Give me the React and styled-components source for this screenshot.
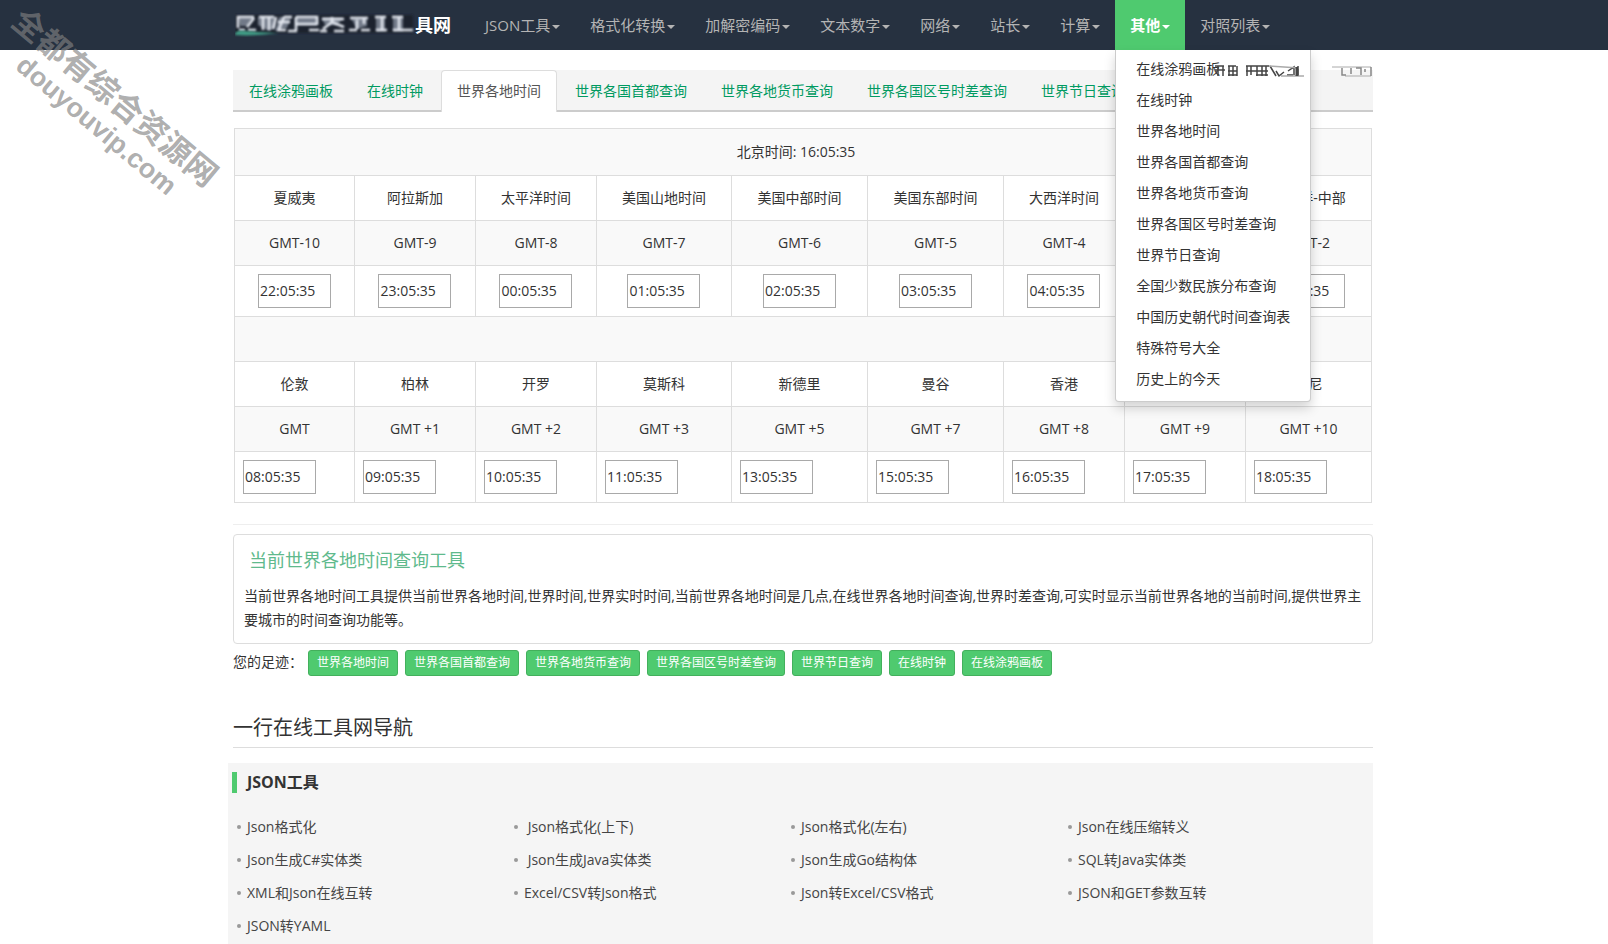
import React from "react";
import styled, { createGlobalStyle } from "styled-components";

const navItems = [
    "JSON工具",
    "格式化转换",
    "加解密编码",
    "文本数字",
    "网络",
    "站长",
    "计算",
    "其他",
    "对照列表",
];

const menuItems = [
    "在线涂鸦画板",
    "在线时钟",
    "世界各地时间",
    "世界各国首都查询",
    "世界各地货币查询",
    "世界各国区号时差查询",
    "世界节日查询",
    "全国少数民族分布查询",
    "中国历史朝代时间查询表",
    "特殊符号大全",
    "历史上的今天",
];

const tabs = [
    "在线涂鸦画板",
    "在线时钟",
    "世界各地时间",
    "世界各国首都查询",
    "世界各地货币查询",
    "世界各国区号时差查询",
    "世界节日查询",
];

const west = [
    ["夏威夷", "GMT-10", "22:05:35"],
    ["阿拉斯加", "GMT-9", "23:05:35"],
    ["太平洋时间", "GMT-8", "00:05:35"],
    ["美国山地时间", "GMT-7", "01:05:35"],
    ["美国中部时间", "GMT-6", "02:05:35"],
    ["美国东部时间", "GMT-5", "03:05:35"],
    ["大西洋时间", "GMT-4", "04:05:35"],
    ["", "", "05:05:35"],
    ["大西洋-中部", "GMT-2", "06:05:35"],
];

const east = [
    ["伦敦", "GMT", "08:05:35"],
    ["柏林", "GMT +1", "09:05:35"],
    ["开罗", "GMT +2", "10:05:35"],
    ["莫斯科", "GMT +3", "11:05:35"],
    ["新德里", "GMT +5", "13:05:35"],
    ["曼谷", "GMT +7", "15:05:35"],
    ["香港", "GMT +8", "16:05:35"],
    ["", "GMT +9", "17:05:35"],
    ["悉尼", "GMT +10", "18:05:35"],
];

const columns = [120, 121, 121, 135, 136, 136, 121, 121, 126];

const footprints = [
    "世界各地时间",
    "世界各国首都查询",
    "世界各地货币查询",
    "世界各国区号时差查询",
    "世界节日查询",
    "在线时钟",
    "在线涂鸦画板",
];

const jsonTools = [
    "Json格式化",
    "\u00a0Json格式化(上下)",
    "Json格式化(左右)",
    "Json在线压缩转义",
    "Json生成C#实体类",
    "\u00a0Json生成Java实体类",
    "Json生成Go结构体",
    "SQL转Java实体类",
    "XML和Json在线互转",
    "Excel/CSV转Json格式",
    "Json转Excel/CSV格式",
    "JSON和GET参数互转",
    "JSON转YAML",
];

function BrandMark() {
    return (
        <svg width="180" height="26" viewBox="0 0 180 26" aria-hidden="true">
            <defs>
                <filter id="soft" x="-5%" y="-20%" width="110%" height="140%">
                    <feGaussianBlur stdDeviation="0.8" />
                </filter>
            </defs>
            <rect x="0" y="3" width="178" height="18" fill="#1b242e" filter="url(#soft)" />
            <g filter="url(#soft)" fill="#8e97a6" opacity="0.75">
                <path d="M3 5h16l-6 9H5zM23 5h17v10l-6 4-11-6zM44 5h12l-4 11-12 3z" />
                <path d="M61 5h21v8H61zM87 6h21l-6 7H90zM116 6h16v8l-10 3zM141 5h9v14h-9zM158 5h10v14h-10z" />
            </g>
            <g filter="url(#soft)" fill="none" stroke="#e2e6ee" strokeWidth="2.6">
                <path d="M19 5H3v11M19 6l-7 9M4 18h6M13 18h8" />
                <path d="M24 5h15M28 5v13M34 5v13M41 5l-3 12M43 10h12M42 18h9" />
                <path d="M49 5h8M49 5l-5 12M61 5h21v8M61 5v14M61 12h21M53 19h9M74 18h10" />
                <path d="M87 7h22M97 5v6M88 17l9-7 12 5M85 19h7M99 19h10" />
                <path d="M115 6h18M122 8v9M129 6v6M114 18h8M126 18h9" />
                <path d="M140 5h11M147 5v14M141 18h11M157 5h11M164 5v14M158 18h20" />
            </g>
            <path d="M0 22c3-6 6-2 44-1-16 2-30 3-44 2z" fill="#3f9c85" filter="url(#soft)" />
        </svg>
    );
}

function MenuSmudge() {
    return (
        <svg width="160" height="14" viewBox="0 0 160 14" aria-hidden="true">
            <defs>
                <filter id="smudge" x="-5%" y="-20%" width="110%" height="140%">
                    <feGaussianBlur stdDeviation="0.5" />
                </filter>
            </defs>
            <g filter="url(#smudge)" fill="none" stroke="#444" strokeWidth="1.5">
                <path d="M0 2h9M3 2v10M8 2v10M0 6h10M13 2h8M14 2v10M18 2v10M22 2v10M13 7h9M13 11h9" />
                <path d="M31 2h23M32 2v10M36 2v9M42 2v10M47 2v10M51 2v10M31 7h22M41 11h12" />
                <path d="M55 2l6 10M61 7l3 5 5-4M73 7l6-4v8M72 11h6M83 2v10" />
                <path d="M54 2l30 2M66 12h23" stroke="#aaa" />
                <path d="M82 3v9" strokeWidth="3" />
                <path d="M117 3h39M130 12h26" stroke="#aaa" strokeWidth="1" />
                <path d="M127 4v7h4M136 4v6M141 4h5v7M150 5v3M156 3v9" stroke="#888" />
            </g>
        </svg>
    );
}

function ZoneRows({ zones, centered }) {
    return (
        <>
            <tr>
                {zones.map(([city, , time]) => (
                    <Cell key={time}>{city}</Cell>
                ))}
            </tr>
            <tr>
                {zones.map(([, gmt, time]) => (
                    <Cell key={time}>{gmt}</Cell>
                ))}
            </tr>
            <tr>
                {zones.map(([city, , time]) => (
                    <Cell key={time} $align={centered ? "center" : "left"}>
                        <TimeInput aria-label={city || time} defaultValue={time} />
                    </Cell>
                ))}
            </tr>
        </>
    );
}

function App() {
    return (
        <>
            <GlobalStyle />
            <Navbar>
                <NavInner>
                    <Brand href="#">
                        <BrandMark />
                        具网
                    </Brand>
                    <NavList>
                        {navItems.map((item) => (
                            <NavItem key={item}>
                                <NavLink href="#" $active={item === "其他"}>
                                    {item}
                                    <Caret />
                                </NavLink>
                                {item === "其他" && (
                                    <Dropdown>
                                        {menuItems.map((entry) => (
                                            <li key={entry}>
                                                <MenuLink href="#">{entry}</MenuLink>
                                            </li>
                                        ))}
                                        <Smudge>
                                            <MenuSmudge />
                                        </Smudge>
                                    </Dropdown>
                                )}
                            </NavItem>
                        ))}
                    </NavList>
                </NavInner>
            </Navbar>
            <Watermark>
                <WatermarkName>全都有综合资源网</WatermarkName>
                <WatermarkSite>douyouvip.com</WatermarkSite>
            </Watermark>
            <Container>
                <Tabs>
                    {tabs.map((tab) => (
                        <li key={tab}>
                            <TabLink href="#" $active={tab === "世界各地时间"}>
                                {tab}
                            </TabLink>
                        </li>
                    ))}
                </Tabs>
                <TimeTable>
                    <colgroup>
                        {columns.map((width, i) => (
                            <col key={i} style={{ width: `${(width / 1137) * 100}%` }} />
                        ))}
                    </colgroup>
                    <tbody>
                        <tr>
                            <ClockCell colSpan={9}>北京时间: 16:05:35</ClockCell>
                        </tr>
                        <ZoneRows zones={west} centered />
                        <tr>
                            <Cell colSpan={9}>&nbsp;</Cell>
                        </tr>
                        <ZoneRows zones={east} />
                    </tbody>
                </TimeTable>
                <Divider />
                <Panel>
                    <PanelTitle>当前世界各地时间查询工具</PanelTitle>
                    <PanelText>
                        当前世界各地时间工具提供当前世界各地时间,世界时间,世界实时时间,当前世界各地时间是几点,在线世界各地时间查询,世界时差查询,可实时显示当前世界各地的当前时间,提供世界主要城市的时间查询功能等。
                    </PanelText>
                </Panel>
                <Footprints>
                    <span>您的足迹：</span>
                    {footprints.map((item) => (
                        <FootprintLink key={item} href="#">
                            {item}
                        </FootprintLink>
                    ))}
                </Footprints>
                <PageTitle>一行在线工具网导航</PageTitle>
                <ToolSection>
                    <SectionTitle>JSON工具</SectionTitle>
                    <ToolList>
                        {jsonTools.map((tool) => (
                            <ToolItem key={tool}>
                                <a href="#">{tool}</a>
                            </ToolItem>
                        ))}
                    </ToolList>
                </ToolSection>
            </Container>
        </>
    );
}

const GlobalStyle = createGlobalStyle`
    * {
        box-sizing: border-box;
    }
    html {
        scrollbar-width: none;
    }
    body {
        margin: 0;
        overflow-x: hidden;
        background: #fff;
        color: #333;
        font-family: "Open Sans", "Noto Sans CJK SC", sans-serif;
        font-size: 14px;
        line-height: 20px;
    }
    ul {
        list-style: none;
        margin: 0;
        padding: 0;
    }
    a {
        color: inherit;
        text-decoration: none;
    }
`;

const Navbar = styled.nav`
    background: #263140;
`;

const Container = styled.main`
    max-width: 1142px;
    margin: 0 auto;
    padding-right: 2px;
`;

const NavInner = styled.div`
    display: flex;
    max-width: 1142px;
    height: 50px;
    margin: 0 auto;
`;

const Brand = styled.a`
    display: flex;
    align-items: center;
    width: 237px;
    padding-left: 2px;
    color: #fff;
    font-size: 18px;
    font-weight: 700;
`;

const NavList = styled.ul`
    display: flex;
`;

const NavItem = styled.li`
    position: relative;
`;

const NavLink = styled.a`
    display: flex;
    align-items: center;
    gap: 2px;
    height: 50px;
    padding: 0 15px;
    font-size: 15px;
    white-space: nowrap;
    color: ${(props) => (props.$active ? "#fff" : "#b4b4b4")};
    background: ${(props) => (props.$active ? "#4fca6f" : "transparent")};
    font-weight: ${(props) => (props.$active ? 700 : 400)};
`;

const Caret = styled.span`
    border: 4px solid transparent;
    border-top-color: currentColor;
    border-bottom: 0;
    margin-top: 4px;
`;

const Dropdown = styled.ul`
    position: absolute;
    top: 50px;
    left: 0;
    z-index: 10;
    padding: 3px 0 7px;
    background: #fff;
    border: 1px solid rgba(0, 0, 0, 0.2);
    border-top: 0;
    border-radius: 0 0 4px 4px;
    box-shadow: 0 6px 12px rgba(0, 0, 0, 0.175);
`;

const MenuLink = styled.a`
    display: block;
    padding: 0 20px;
    line-height: 31px;
    white-space: nowrap;
`;

const Smudge = styled.span`
    position: absolute;
    top: 14px;
    left: 99px;
    line-height: 0;
`;

const Watermark = styled.div`
    position: absolute;
    top: 1px;
    left: 29px;
    z-index: 20;
    transform: rotate(40deg);
    transform-origin: 0 0;
    color: rgba(130, 130, 130, 0.65);
    font-weight: 700;
    white-space: nowrap;
    pointer-events: none;
`;

const WatermarkName = styled.div`
    font-size: 32px;
    line-height: 36px;
`;

const WatermarkSite = styled.div`
    font-family: "Liberation Sans", sans-serif;
    font-size: 27px;
    line-height: 32px;
    padding-left: 32px;
`;

const Tabs = styled.ul`
    display: flex;
    height: 42px;
    margin-top: 20px;
    background: #f4f4f4;
    border-bottom: 2px solid #ccc;
`;

const TabLink = styled.a`
    display: block;
    height: 42px;
    margin-right: 2px;
    padding: 10px 15px;
    border: 1px solid transparent;
    border-bottom: 0;
    border-radius: 4px 4px 0 0;
    white-space: nowrap;
    color: ${(props) => (props.$active ? "#555" : "#009a61")};
    border-color: ${(props) => (props.$active ? "#ddd" : "transparent")};
    background: ${(props) => (props.$active ? "#fff" : "transparent")};
`;

const TimeTable = styled.table`
    width: calc(100% - 2px);
    margin: 16px 1px 0;
    table-layout: fixed;
    border-collapse: collapse;
    tr:nth-child(odd) {
        background: #f9f9f9;
    }
`;

const Cell = styled.td`
    padding: 8px;
    border: 1px solid #ddd;
    line-height: 28px;
    text-align: ${(props) => props.$align || "center"};
`;

const ClockCell = styled(Cell)`
    padding-right: 22px;
    line-height: 30px;
`;

const TimeInput = styled.input`
    display: inline-block;
    width: 73px;
    height: 34px;
    padding: 0 1px 2px;
    border: 1px solid #a9a9a9;
    background: #fff;
    color: #333;
    font: inherit;
    vertical-align: top;
`;

const Divider = styled.hr`
    margin: 21px 0 9px;
    border: 0;
    border-top: 1px solid #eee;
`;

const Panel = styled.section`
    padding: 12px 10px 11px;
    border: 1px solid #ddd;
    border-radius: 4px;
`;

const PanelTitle = styled.h2`
    margin: 0 0 11px;
    padding: 0 5px;
    color: #5fba8d;
    font-size: 18px;
    font-weight: 400;
    line-height: 26px;
`;

const PanelText = styled.p`
    margin: 0;
    line-height: 24px;
`;

const Footprints = styled.div`
    display: flex;
    gap: 7px;
    margin-top: 6px;
    span {
        width: 68px;
        line-height: 24px;
        white-space: nowrap;
    }
`;

const FootprintLink = styled.a`
    padding: 0 8px;
    border: 1px solid #43b05c;
    border-radius: 3px;
    background: #4fca6f;
    color: #fff;
    font-size: 12px;
    line-height: 24px;
`;

const PageTitle = styled.h2`
    margin: 37px 0 15px;
    padding-bottom: 4px;
    border-bottom: 1px solid #ddd;
    font-size: 20px;
    font-weight: 400;
    line-height: 30px;
`;

const ToolSection = styled.section`
    margin-left: -5px;
    padding: 9px 0 20px 4px;
    background: #f5f5f5;
`;

const SectionTitle = styled.h3`
    margin: 0 0 17px;
    padding-left: 10px;
    border-left: 5px solid #4fca6f;
    font-size: 16px;
    font-weight: 700;
    line-height: 21px;
`;

const ToolList = styled.ul`
    display: grid;
    grid-template-columns: repeat(4, 277px);
    padding-left: 5px;
`;

const ToolItem = styled.li`
    display: flex;
    align-items: center;
    gap: 6px;
    height: 33px;
    color: #444;
    &::before {
        content: "";
        width: 4px;
        height: 4px;
        border-radius: 50%;
        background: #999;
    }
`;

export default App;
